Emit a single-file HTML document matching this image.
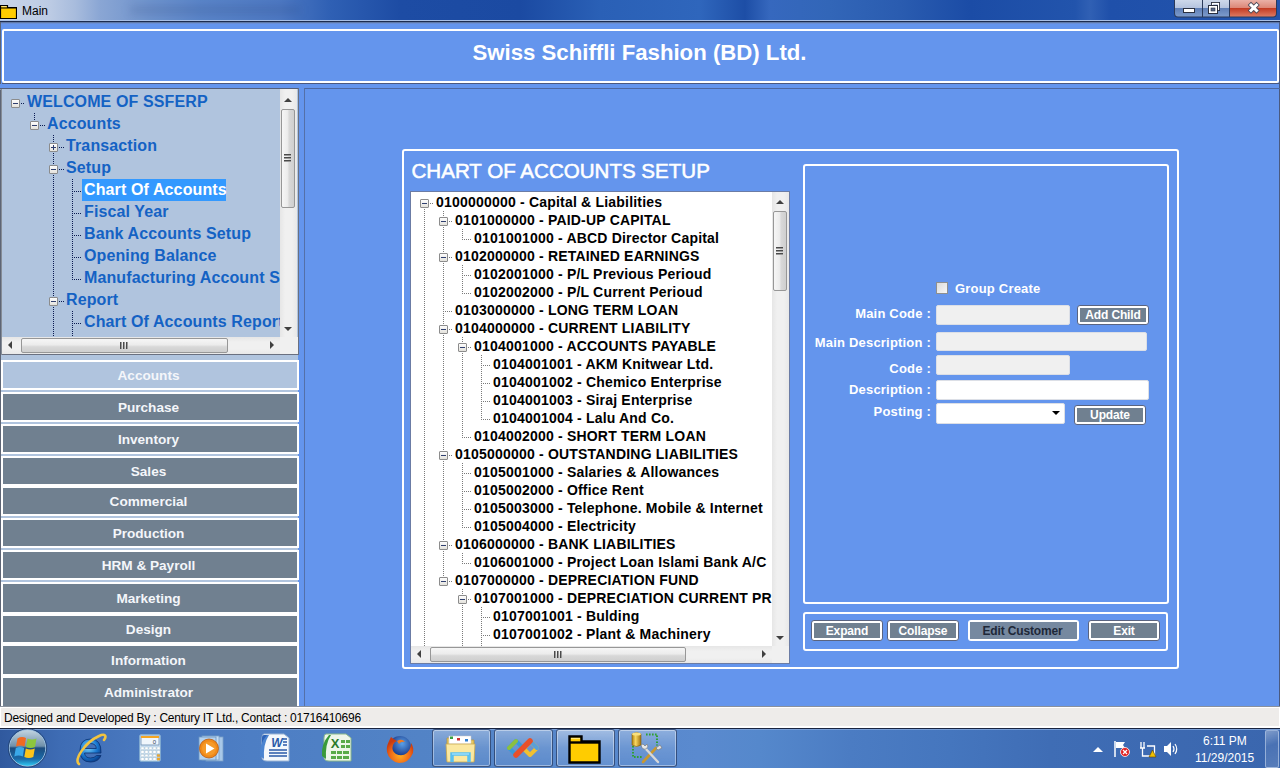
<!DOCTYPE html><html><head><meta charset="utf-8"><style>html,body{margin:0;padding:0;width:1280px;height:768px;overflow:hidden;position:relative}body{font-family:"Liberation Sans",sans-serif}</style></head><body><div style="position:absolute;left:0px;top:0px;width:1280px;height:768px;background:#6495ED"></div>
<div style="position:absolute;left:0px;top:0px;width:1280px;height:20px;background:linear-gradient(90deg,#c9d5e8 0px,#bccbe4 50px,#a8bcdd 75px,#8aa6d4 100px,#6e92cc 150px,#5a84c8 200px,#4d78c2 280px,#2f60b4 330px,#1d4ca4 400px,#1b4aa2 520px,#2a60b6 600px,#2f66bc 700px,#1d4ea6 745px,#3668be 770px,#3266b8 830px,#2a5cb0 900px,#1b4ca6 970px,#2254ac 1075px,#3060b4 1090px,#1f50aa 1110px,#2354ac 1280px)"></div>
<div style="position:absolute;left:130px;top:6px;width:170px;height:8px;background:rgba(20,40,90,0.14);filter:blur(4px)"></div>
<div style="position:absolute;left:0px;top:20px;width:1280px;height:1px;background:#a9c0e6"></div>
<div style="position:absolute;left:0px;top:21px;width:1280px;height:1px;background:#1c2c50"></div>
<div style="position:absolute;left:0px;top:22px;width:1280px;height:1px;background:#5f79a8"></div>
<div style="position:absolute;left:0px;top:23px;width:1280px;height:1px;background:#6a8fd8"></div>
<svg style="position:absolute;left:0;top:4px" width="17" height="15" viewBox="0 0 17 15"><path d="M0.5 1.5h7v2h9v11h-16z" fill="#ffcc00" stroke="#000" stroke-width="1.2"/><path d="M1 4h15" stroke="#000" stroke-width="1"/><path d="M1.5 2.5h5" stroke="#ffe680" stroke-width="1"/></svg>
<div style="position:absolute;left:22px;top:4.34px;line-height:15px;font-family:'Liberation Sans',sans-serif;font-size:12px;font-weight:normal;color:#000;white-space:nowrap;">Main</div>
<svg style="position:absolute;left:1173px;top:0" width="105" height="19" viewBox="0 0 105 19"><defs><linearGradient id="cbn" x1="0" y1="0" x2="0" y2="1"><stop offset="0" stop-color="#cdd8ea"/><stop offset="0.48" stop-color="#b4c3de"/><stop offset="0.5" stop-color="#5f7fb6"/><stop offset="1" stop-color="#7d9bcc"/></linearGradient><linearGradient id="cbc" x1="0" y1="0" x2="0" y2="1"><stop offset="0" stop-color="#eab0a6"/><stop offset="0.48" stop-color="#dc8676"/><stop offset="0.5" stop-color="#c33a22"/><stop offset="1" stop-color="#dd7a62"/></linearGradient></defs><path d="M1 0 V13 Q1 17.5 5 17.5 H100 Q104 17.5 104 13 V0 Z" fill="#2b3a5a"/><path d="M2 0 V13 Q2 16.5 5 16.5 H29 V0 Z" fill="url(#cbn)"/><rect x="30" y="0" width="26" height="16.5" fill="url(#cbn)"/><path d="M57 0 V16.5 H100 Q103 16.5 103 13 V0 Z" fill="url(#cbc)"/><rect x="10.5" y="8.5" width="11" height="4" fill="#fff" stroke="#2a3040" stroke-width="1"/><rect x="38.5" y="2.5" width="8" height="8" fill="none" stroke="#2a3040" stroke-width="1"/><rect x="39.5" y="3.5" width="6" height="6" fill="none" stroke="#fff" stroke-width="1.2"/><rect x="35.5" y="5.5" width="9" height="8" fill="#fff" stroke="#2a3040" stroke-width="1"/><rect x="38" y="8" width="4" height="3" fill="#5a6a8a" stroke="#2a3040" stroke-width="0.6"/><path d="M78 5 L83.5 10.5 M83.5 5 L78 10.5" stroke="#4a4a58" stroke-width="4.6" stroke-linecap="square"/><path d="M78 5 L83.5 10.5 M83.5 5 L78 10.5" stroke="#fff" stroke-width="3" stroke-linecap="square"/></svg>
<div style="position:absolute;left:0px;top:22px;width:1px;height:62px;background:#5d6575"></div>
<div style="position:absolute;left:0px;top:88px;width:1px;height:618px;background:#5d6575"></div>
<div style="position:absolute;left:1279px;top:22px;width:1px;height:685px;background:#4a5a80"></div>
<div style="position:absolute;left:2px;top:29px;width:1277px;height:54px;box-sizing:border-box;border:2px solid #fff;border-radius:2px"></div>
<div style="position:absolute;left:2px;top:83px;width:1277px;height:1px;background:#4a5880"></div>
<div style="position:absolute;left:1279px;top:29px;width:1px;height:55px;background:#4a5880"></div>
<div style="position:absolute;left:439.5px;width:400px;text-align:center;top:39.31px;line-height:28px;font-family:'Liberation Sans',sans-serif;font-size:22.2px;font-weight:bold;color:#fff;white-space:nowrap;">Swiss Schiffli Fashion (BD) Ltd.</div>
<div style="position:absolute;left:0px;top:88px;width:299px;height:1px;background:#56607a"></div>
<div style="position:absolute;left:0px;top:89px;width:298px;height:1px;background:#8e98aa"></div>
<div style="position:absolute;left:1px;top:89px;width:1px;height:266px;background:#858c96"></div>
<div style="position:absolute;left:2px;top:89px;width:296px;height:266px;background:#B0C4DE"></div>
<div style="position:absolute;left:298px;top:88px;width:1px;height:267px;background:#6a7080"></div>
<div style="position:absolute;left:2px;top:354px;width:296px;height:1px;background:#6a7080"></div>
<div style="position:absolute;left:2px;top:89px;width:278px;height:248px;overflow:hidden">
<div style="position:absolute;left:13px;top:14px;width:9px;height:1px;background:repeating-linear-gradient(90deg,#0a1a50 0 1px,transparent 1px 2px)"></div>
<div style="position:absolute;left:9px;top:10px;width:7px;height:7px;border:1px solid #8c8c8c;border-radius:1px;background:linear-gradient(#fdfdfd,#e4e2dc)"></div>
<div style="position:absolute;left:11px;top:14px;width:5px;height:1px;background:#2f3f6f"></div>
<div style="position:absolute;left:25px;top:3.46px;line-height:20px;font-family:'Liberation Sans',sans-serif;font-size:16px;font-weight:bold;color:#1462c4;white-space:nowrap;letter-spacing:0.12px">WELCOME OF SSFERP</div>
<div style="position:absolute;left:32px;top:24px;width:1px;height:13px;background:repeating-linear-gradient(180deg,#0a1a50 0 1px,transparent 1px 2px)"></div>
<div style="position:absolute;left:32px;top:36px;width:11px;height:1px;background:repeating-linear-gradient(90deg,#0a1a50 0 1px,transparent 1px 2px)"></div>
<div style="position:absolute;left:28px;top:32px;width:7px;height:7px;border:1px solid #8c8c8c;border-radius:1px;background:linear-gradient(#fdfdfd,#e4e2dc)"></div>
<div style="position:absolute;left:30px;top:36px;width:5px;height:1px;background:#2f3f6f"></div>
<div style="position:absolute;left:45px;top:25.46px;line-height:20px;font-family:'Liberation Sans',sans-serif;font-size:16px;font-weight:bold;color:#1462c4;white-space:nowrap;letter-spacing:0.12px">Accounts</div>
<div style="position:absolute;left:51px;top:46px;width:1px;height:13px;background:repeating-linear-gradient(180deg,#0a1a50 0 1px,transparent 1px 2px)"></div>
<div style="position:absolute;left:51px;top:58px;width:1px;height:9px;background:repeating-linear-gradient(180deg,#0a1a50 0 1px,transparent 1px 2px)"></div>
<div style="position:absolute;left:51px;top:58px;width:11px;height:1px;background:repeating-linear-gradient(90deg,#0a1a50 0 1px,transparent 1px 2px)"></div>
<div style="position:absolute;left:47px;top:54px;width:7px;height:7px;border:1px solid #8c8c8c;border-radius:1px;background:linear-gradient(#fdfdfd,#e4e2dc)"></div>
<div style="position:absolute;left:49px;top:58px;width:5px;height:1px;background:#2f3f6f"></div>
<div style="position:absolute;left:51px;top:56px;width:1px;height:5px;background:#2f3f6f"></div>
<div style="position:absolute;left:64px;top:47.46px;line-height:20px;font-family:'Liberation Sans',sans-serif;font-size:16px;font-weight:bold;color:#1462c4;white-space:nowrap;letter-spacing:0.12px">Transaction</div>
<div style="position:absolute;left:51px;top:68px;width:1px;height:13px;background:repeating-linear-gradient(180deg,#0a1a50 0 1px,transparent 1px 2px)"></div>
<div style="position:absolute;left:51px;top:80px;width:1px;height:9px;background:repeating-linear-gradient(180deg,#0a1a50 0 1px,transparent 1px 2px)"></div>
<div style="position:absolute;left:51px;top:80px;width:11px;height:1px;background:repeating-linear-gradient(90deg,#0a1a50 0 1px,transparent 1px 2px)"></div>
<div style="position:absolute;left:47px;top:76px;width:7px;height:7px;border:1px solid #8c8c8c;border-radius:1px;background:linear-gradient(#fdfdfd,#e4e2dc)"></div>
<div style="position:absolute;left:49px;top:80px;width:5px;height:1px;background:#2f3f6f"></div>
<div style="position:absolute;left:64px;top:69.46px;line-height:20px;font-family:'Liberation Sans',sans-serif;font-size:16px;font-weight:bold;color:#1462c4;white-space:nowrap;letter-spacing:0.12px">Setup</div>
<div style="position:absolute;left:51px;top:90px;width:1px;height:21px;background:repeating-linear-gradient(180deg,#0a1a50 0 1px,transparent 1px 2px)"></div>
<div style="position:absolute;left:70px;top:90px;width:1px;height:13px;background:repeating-linear-gradient(180deg,#0a1a50 0 1px,transparent 1px 2px)"></div>
<div style="position:absolute;left:70px;top:102px;width:1px;height:9px;background:repeating-linear-gradient(180deg,#0a1a50 0 1px,transparent 1px 2px)"></div>
<div style="position:absolute;left:70px;top:102px;width:9px;height:1px;background:repeating-linear-gradient(90deg,#0a1a50 0 1px,transparent 1px 2px)"></div>
<div style="position:absolute;left:80px;top:90px;width:144px;height:22px;background:#3399ff"></div>
<div style="position:absolute;left:82px;top:91.46px;line-height:20px;font-family:'Liberation Sans',sans-serif;font-size:16px;font-weight:bold;color:#fff;white-space:nowrap;letter-spacing:0.12px">Chart Of Accounts</div>
<div style="position:absolute;left:51px;top:112px;width:1px;height:21px;background:repeating-linear-gradient(180deg,#0a1a50 0 1px,transparent 1px 2px)"></div>
<div style="position:absolute;left:70px;top:112px;width:1px;height:13px;background:repeating-linear-gradient(180deg,#0a1a50 0 1px,transparent 1px 2px)"></div>
<div style="position:absolute;left:70px;top:124px;width:1px;height:9px;background:repeating-linear-gradient(180deg,#0a1a50 0 1px,transparent 1px 2px)"></div>
<div style="position:absolute;left:70px;top:124px;width:9px;height:1px;background:repeating-linear-gradient(90deg,#0a1a50 0 1px,transparent 1px 2px)"></div>
<div style="position:absolute;left:82px;top:113.46px;line-height:20px;font-family:'Liberation Sans',sans-serif;font-size:16px;font-weight:bold;color:#1462c4;white-space:nowrap;letter-spacing:0.12px">Fiscal Year</div>
<div style="position:absolute;left:51px;top:134px;width:1px;height:21px;background:repeating-linear-gradient(180deg,#0a1a50 0 1px,transparent 1px 2px)"></div>
<div style="position:absolute;left:70px;top:134px;width:1px;height:13px;background:repeating-linear-gradient(180deg,#0a1a50 0 1px,transparent 1px 2px)"></div>
<div style="position:absolute;left:70px;top:146px;width:1px;height:9px;background:repeating-linear-gradient(180deg,#0a1a50 0 1px,transparent 1px 2px)"></div>
<div style="position:absolute;left:70px;top:146px;width:9px;height:1px;background:repeating-linear-gradient(90deg,#0a1a50 0 1px,transparent 1px 2px)"></div>
<div style="position:absolute;left:82px;top:135.46px;line-height:20px;font-family:'Liberation Sans',sans-serif;font-size:16px;font-weight:bold;color:#1462c4;white-space:nowrap;letter-spacing:0.12px">Bank Accounts Setup</div>
<div style="position:absolute;left:51px;top:156px;width:1px;height:21px;background:repeating-linear-gradient(180deg,#0a1a50 0 1px,transparent 1px 2px)"></div>
<div style="position:absolute;left:70px;top:156px;width:1px;height:13px;background:repeating-linear-gradient(180deg,#0a1a50 0 1px,transparent 1px 2px)"></div>
<div style="position:absolute;left:70px;top:168px;width:1px;height:9px;background:repeating-linear-gradient(180deg,#0a1a50 0 1px,transparent 1px 2px)"></div>
<div style="position:absolute;left:70px;top:168px;width:9px;height:1px;background:repeating-linear-gradient(90deg,#0a1a50 0 1px,transparent 1px 2px)"></div>
<div style="position:absolute;left:82px;top:157.46px;line-height:20px;font-family:'Liberation Sans',sans-serif;font-size:16px;font-weight:bold;color:#1462c4;white-space:nowrap;letter-spacing:0.12px">Opening Balance</div>
<div style="position:absolute;left:51px;top:178px;width:1px;height:21px;background:repeating-linear-gradient(180deg,#0a1a50 0 1px,transparent 1px 2px)"></div>
<div style="position:absolute;left:70px;top:178px;width:1px;height:13px;background:repeating-linear-gradient(180deg,#0a1a50 0 1px,transparent 1px 2px)"></div>
<div style="position:absolute;left:70px;top:190px;width:9px;height:1px;background:repeating-linear-gradient(90deg,#0a1a50 0 1px,transparent 1px 2px)"></div>
<div style="position:absolute;left:82px;top:179.46px;line-height:20px;font-family:'Liberation Sans',sans-serif;font-size:16px;font-weight:bold;color:#1462c4;white-space:nowrap;letter-spacing:0.12px">Manufacturing Account Setup</div>
<div style="position:absolute;left:51px;top:200px;width:1px;height:13px;background:repeating-linear-gradient(180deg,#0a1a50 0 1px,transparent 1px 2px)"></div>
<div style="position:absolute;left:51px;top:212px;width:1px;height:9px;background:repeating-linear-gradient(180deg,#0a1a50 0 1px,transparent 1px 2px)"></div>
<div style="position:absolute;left:51px;top:212px;width:11px;height:1px;background:repeating-linear-gradient(90deg,#0a1a50 0 1px,transparent 1px 2px)"></div>
<div style="position:absolute;left:47px;top:208px;width:7px;height:7px;border:1px solid #8c8c8c;border-radius:1px;background:linear-gradient(#fdfdfd,#e4e2dc)"></div>
<div style="position:absolute;left:49px;top:212px;width:5px;height:1px;background:#2f3f6f"></div>
<div style="position:absolute;left:64px;top:201.46px;line-height:20px;font-family:'Liberation Sans',sans-serif;font-size:16px;font-weight:bold;color:#1462c4;white-space:nowrap;letter-spacing:0.12px">Report</div>
<div style="position:absolute;left:51px;top:222px;width:1px;height:21px;background:repeating-linear-gradient(180deg,#0a1a50 0 1px,transparent 1px 2px)"></div>
<div style="position:absolute;left:70px;top:222px;width:1px;height:13px;background:repeating-linear-gradient(180deg,#0a1a50 0 1px,transparent 1px 2px)"></div>
<div style="position:absolute;left:70px;top:234px;width:1px;height:9px;background:repeating-linear-gradient(180deg,#0a1a50 0 1px,transparent 1px 2px)"></div>
<div style="position:absolute;left:70px;top:234px;width:9px;height:1px;background:repeating-linear-gradient(90deg,#0a1a50 0 1px,transparent 1px 2px)"></div>
<div style="position:absolute;left:82px;top:223.46px;line-height:20px;font-family:'Liberation Sans',sans-serif;font-size:16px;font-weight:bold;color:#1462c4;white-space:nowrap;letter-spacing:0.12px">Chart Of Accounts Report</div>
<div style="position:absolute;left:51px;top:244px;width:1px;height:21px;background:repeating-linear-gradient(180deg,#0a1a50 0 1px,transparent 1px 2px)"></div>
<div style="position:absolute;left:70px;top:244px;width:1px;height:13px;background:repeating-linear-gradient(180deg,#0a1a50 0 1px,transparent 1px 2px)"></div>
<div style="position:absolute;left:70px;top:256px;width:9px;height:1px;background:repeating-linear-gradient(90deg,#0a1a50 0 1px,transparent 1px 2px)"></div>
<div style="position:absolute;left:82px;top:245.46px;line-height:20px;font-family:'Liberation Sans',sans-serif;font-size:16px;font-weight:bold;color:#1462c4;white-space:nowrap;letter-spacing:0.12px">Trial Balance</div>
<div style="position:absolute;left:51px;top:266px;width:1px;height:13px;background:repeating-linear-gradient(180deg,#0a1a50 0 1px,transparent 1px 2px)"></div>
<div style="position:absolute;left:51px;top:278px;width:11px;height:1px;background:repeating-linear-gradient(90deg,#0a1a50 0 1px,transparent 1px 2px)"></div>
<div style="position:absolute;left:64px;top:267.46px;line-height:20px;font-family:'Liberation Sans',sans-serif;font-size:16px;font-weight:bold;color:#1462c4;white-space:nowrap;letter-spacing:0.12px">Utility</div>
</div>
<div style="position:absolute;left:280px;top:89px;width:17px;height:248px;background:linear-gradient(90deg,#e6e6e6,#f0f0f0 30%,#f0f0f0 70%,#e8e8e8)"></div>
<div style="position:absolute;left:284px;top:98px;width:0;height:0;border-left:4px solid transparent;border-right:4px solid transparent;border-bottom:4px solid #404040"></div>
<div style="position:absolute;left:284px;top:327px;width:0;height:0;border-left:4px solid transparent;border-right:4px solid transparent;border-top:4px solid #404040"></div>
<div style="position:absolute;left:281px;top:109px;width:12px;height:97px;border:1px solid #979797;border-radius:2px;background:linear-gradient(90deg,#f6f6f6,#ececec 45%,#d8d8d8 60%,#cfcfcf)"></div>
<div style="position:absolute;left:284px;top:154px;width:7px;height:1px;background:#4a4a4a"></div>
<div style="position:absolute;left:284px;top:155px;width:7px;height:1px;background:#9a9a9a"></div>
<div style="position:absolute;left:284px;top:157px;width:7px;height:1px;background:#4a4a4a"></div>
<div style="position:absolute;left:284px;top:158px;width:7px;height:1px;background:#9a9a9a"></div>
<div style="position:absolute;left:284px;top:160px;width:7px;height:1px;background:#4a4a4a"></div>
<div style="position:absolute;left:284px;top:161px;width:7px;height:1px;background:#9a9a9a"></div>
<div style="position:absolute;left:2px;top:337px;width:278px;height:17px;background:linear-gradient(180deg,#e6e6e6,#f0f0f0 30%,#f0f0f0 70%,#e8e8e8)"></div>
<div style="position:absolute;left:8px;top:341px;width:0;height:0;border-top:4px solid transparent;border-bottom:4px solid transparent;border-right:4px solid #404040"></div>
<div style="position:absolute;left:270px;top:341px;width:0;height:0;border-top:4px solid transparent;border-bottom:4px solid transparent;border-left:4px solid #404040"></div>
<div style="position:absolute;left:21px;top:338px;width:205px;height:13px;border:1px solid #979797;border-radius:2px;background:linear-gradient(180deg,#f6f6f6,#ececec 45%,#d8d8d8 60%,#cfcfcf)"></div>
<div style="position:absolute;left:120px;top:342px;width:1px;height:7px;background:#4a4a4a"></div>
<div style="position:absolute;left:121px;top:342px;width:1px;height:7px;background:#9a9a9a"></div>
<div style="position:absolute;left:123px;top:342px;width:1px;height:7px;background:#4a4a4a"></div>
<div style="position:absolute;left:124px;top:342px;width:1px;height:7px;background:#9a9a9a"></div>
<div style="position:absolute;left:126px;top:342px;width:1px;height:7px;background:#4a4a4a"></div>
<div style="position:absolute;left:127px;top:342px;width:1px;height:7px;background:#9a9a9a"></div>
<div style="position:absolute;left:280px;top:337px;width:18px;height:17px;background:#f0f0f0"></div>
<div style="position:absolute;left:1px;top:355px;width:297px;height:351px;background:#B0C4DE"></div>
<div style="position:absolute;left:1px;top:360px;width:298px;height:30px;background:#fff"></div>
<div style="position:absolute;left:1px;top:392px;width:298px;height:30px;background:#fff"></div>
<div style="position:absolute;left:1px;top:424px;width:298px;height:30px;background:#fff"></div>
<div style="position:absolute;left:1px;top:456px;width:298px;height:30px;background:#fff"></div>
<div style="position:absolute;left:1px;top:486px;width:298px;height:30px;background:#fff"></div>
<div style="position:absolute;left:1px;top:518px;width:298px;height:30px;background:#fff"></div>
<div style="position:absolute;left:1px;top:550px;width:298px;height:30px;background:#fff"></div>
<div style="position:absolute;left:1px;top:582px;width:298px;height:32px;background:#fff"></div>
<div style="position:absolute;left:1px;top:614px;width:298px;height:30px;background:#fff"></div>
<div style="position:absolute;left:1px;top:644px;width:298px;height:32px;background:#fff"></div>
<div style="position:absolute;left:1px;top:676px;width:298px;height:32px;background:#fff"></div>
<div style="position:absolute;left:3px;top:362px;width:294px;height:26px;background:#B0C4DE"></div>
<div style="position:absolute;left:-51.5px;width:400px;text-align:center;top:366.79px;line-height:17px;font-family:'Liberation Sans',sans-serif;font-size:13.6px;font-weight:bold;color:#f4f6fa;white-space:nowrap;">Accounts</div>
<div style="position:absolute;left:3px;top:394px;width:294px;height:26px;background:#708090"></div>
<div style="position:absolute;left:-51.5px;width:400px;text-align:center;top:398.79px;line-height:17px;font-family:'Liberation Sans',sans-serif;font-size:13.6px;font-weight:bold;color:#f4f6fa;white-space:nowrap;">Purchase</div>
<div style="position:absolute;left:3px;top:426px;width:294px;height:26px;background:#708090"></div>
<div style="position:absolute;left:-51.5px;width:400px;text-align:center;top:430.79px;line-height:17px;font-family:'Liberation Sans',sans-serif;font-size:13.6px;font-weight:bold;color:#f4f6fa;white-space:nowrap;">Inventory</div>
<div style="position:absolute;left:3px;top:458px;width:294px;height:26px;background:#708090"></div>
<div style="position:absolute;left:-51.5px;width:400px;text-align:center;top:462.79px;line-height:17px;font-family:'Liberation Sans',sans-serif;font-size:13.6px;font-weight:bold;color:#f4f6fa;white-space:nowrap;">Sales</div>
<div style="position:absolute;left:3px;top:488px;width:294px;height:26px;background:#708090"></div>
<div style="position:absolute;left:-51.5px;width:400px;text-align:center;top:492.79px;line-height:17px;font-family:'Liberation Sans',sans-serif;font-size:13.6px;font-weight:bold;color:#f4f6fa;white-space:nowrap;">Commercial</div>
<div style="position:absolute;left:3px;top:520px;width:294px;height:26px;background:#708090"></div>
<div style="position:absolute;left:-51.5px;width:400px;text-align:center;top:524.79px;line-height:17px;font-family:'Liberation Sans',sans-serif;font-size:13.6px;font-weight:bold;color:#f4f6fa;white-space:nowrap;">Production</div>
<div style="position:absolute;left:3px;top:552px;width:294px;height:26px;background:#708090"></div>
<div style="position:absolute;left:-51.5px;width:400px;text-align:center;top:556.79px;line-height:17px;font-family:'Liberation Sans',sans-serif;font-size:13.6px;font-weight:bold;color:#f4f6fa;white-space:nowrap;">HRM &amp; Payroll</div>
<div style="position:absolute;left:3px;top:584px;width:294px;height:28px;background:#708090"></div>
<div style="position:absolute;left:-51.5px;width:400px;text-align:center;top:589.79px;line-height:17px;font-family:'Liberation Sans',sans-serif;font-size:13.6px;font-weight:bold;color:#f4f6fa;white-space:nowrap;">Marketing</div>
<div style="position:absolute;left:3px;top:616px;width:294px;height:26px;background:#708090"></div>
<div style="position:absolute;left:-51.5px;width:400px;text-align:center;top:620.79px;line-height:17px;font-family:'Liberation Sans',sans-serif;font-size:13.6px;font-weight:bold;color:#f4f6fa;white-space:nowrap;">Design</div>
<div style="position:absolute;left:3px;top:646px;width:294px;height:28px;background:#708090"></div>
<div style="position:absolute;left:-51.5px;width:400px;text-align:center;top:651.79px;line-height:17px;font-family:'Liberation Sans',sans-serif;font-size:13.6px;font-weight:bold;color:#f4f6fa;white-space:nowrap;">Information</div>
<div style="position:absolute;left:3px;top:678px;width:294px;height:28px;background:#708090"></div>
<div style="position:absolute;left:-51.5px;width:400px;text-align:center;top:683.79px;line-height:17px;font-family:'Liberation Sans',sans-serif;font-size:13.6px;font-weight:bold;color:#f4f6fa;white-space:nowrap;">Administrator</div>
<div style="position:absolute;left:0px;top:706px;width:300px;height:1px;background:#fff"></div>
<div style="position:absolute;left:304px;top:88px;width:976px;height:1px;background:#4f68a0"></div>
<div style="position:absolute;left:304px;top:88px;width:1px;height:618px;background:#5470a8"></div>
<div style="position:absolute;left:402px;top:149px;width:777px;height:520px;box-sizing:border-box;border:2px solid #fff;border-radius:3px"></div>
<div style="position:absolute;left:411.5px;top:157.88px;line-height:26px;font-family:'Liberation Sans',sans-serif;font-size:20.55px;font-weight:normal;color:#fff;white-space:nowrap;-webkit-text-stroke:0.55px #fff">CHART OF ACCOUNTS SETUP</div>
<div style="position:absolute;left:803px;top:164px;width:366px;height:440px;box-sizing:border-box;border:2px solid #fff;border-radius:3px"></div>
<div style="position:absolute;left:803px;top:612px;width:365px;height:39px;box-sizing:border-box;border:2px solid #fff;border-radius:3px"></div>
<div style="position:absolute;left:410px;top:191px;width:380px;height:473px;background:#6b7ca5"></div>
<div style="position:absolute;left:411px;top:192px;width:378px;height:471px;background:#fff"></div>
<div style="position:absolute;left:411px;top:192px;width:361px;height:454px;overflow:hidden">
<div style="position:absolute;left:13px;top:11px;width:1px;height:9px;background:repeating-linear-gradient(180deg,#7a7a7a 0 1px,transparent 1px 2px)"></div>
<div style="position:absolute;left:13px;top:11px;width:9px;height:1px;background:repeating-linear-gradient(90deg,#7a7a7a 0 1px,transparent 1px 2px)"></div>
<div style="position:absolute;left:9px;top:7px;width:7px;height:7px;border:1px solid #8c8c8c;border-radius:1px;background:linear-gradient(#fdfdfd,#e4e2dc)"></div>
<div style="position:absolute;left:11px;top:11px;width:5px;height:1px;background:#2f3f6f"></div>
<div style="position:absolute;left:25px;top:1.15px;line-height:18px;font-family:'Liberation Sans',sans-serif;font-size:14px;font-weight:bold;color:#000;white-space:nowrap;letter-spacing:0.2px">0100000000 - Capital &amp; Liabilities</div>
<div style="position:absolute;left:13px;top:21px;width:1px;height:17px;background:repeating-linear-gradient(180deg,#7a7a7a 0 1px,transparent 1px 2px)"></div>
<div style="position:absolute;left:32px;top:19px;width:1px;height:11px;background:repeating-linear-gradient(180deg,#7a7a7a 0 1px,transparent 1px 2px)"></div>
<div style="position:absolute;left:32px;top:29px;width:1px;height:9px;background:repeating-linear-gradient(180deg,#7a7a7a 0 1px,transparent 1px 2px)"></div>
<div style="position:absolute;left:32px;top:29px;width:9px;height:1px;background:repeating-linear-gradient(90deg,#7a7a7a 0 1px,transparent 1px 2px)"></div>
<div style="position:absolute;left:28px;top:25px;width:7px;height:7px;border:1px solid #8c8c8c;border-radius:1px;background:linear-gradient(#fdfdfd,#e4e2dc)"></div>
<div style="position:absolute;left:30px;top:29px;width:5px;height:1px;background:#2f3f6f"></div>
<div style="position:absolute;left:44px;top:19.15px;line-height:18px;font-family:'Liberation Sans',sans-serif;font-size:14px;font-weight:bold;color:#000;white-space:nowrap;letter-spacing:0.2px">0101000000 - PAID-UP CAPITAL</div>
<div style="position:absolute;left:13px;top:39px;width:1px;height:17px;background:repeating-linear-gradient(180deg,#7a7a7a 0 1px,transparent 1px 2px)"></div>
<div style="position:absolute;left:32px;top:39px;width:1px;height:17px;background:repeating-linear-gradient(180deg,#7a7a7a 0 1px,transparent 1px 2px)"></div>
<div style="position:absolute;left:51px;top:37px;width:1px;height:11px;background:repeating-linear-gradient(180deg,#7a7a7a 0 1px,transparent 1px 2px)"></div>
<div style="position:absolute;left:51px;top:47px;width:9px;height:1px;background:repeating-linear-gradient(90deg,#7a7a7a 0 1px,transparent 1px 2px)"></div>
<div style="position:absolute;left:63px;top:37.15px;line-height:18px;font-family:'Liberation Sans',sans-serif;font-size:14px;font-weight:bold;color:#000;white-space:nowrap;letter-spacing:0.2px">0101001000 - ABCD Director Capital</div>
<div style="position:absolute;left:13px;top:57px;width:1px;height:17px;background:repeating-linear-gradient(180deg,#7a7a7a 0 1px,transparent 1px 2px)"></div>
<div style="position:absolute;left:32px;top:55px;width:1px;height:11px;background:repeating-linear-gradient(180deg,#7a7a7a 0 1px,transparent 1px 2px)"></div>
<div style="position:absolute;left:32px;top:65px;width:1px;height:9px;background:repeating-linear-gradient(180deg,#7a7a7a 0 1px,transparent 1px 2px)"></div>
<div style="position:absolute;left:32px;top:65px;width:9px;height:1px;background:repeating-linear-gradient(90deg,#7a7a7a 0 1px,transparent 1px 2px)"></div>
<div style="position:absolute;left:28px;top:61px;width:7px;height:7px;border:1px solid #8c8c8c;border-radius:1px;background:linear-gradient(#fdfdfd,#e4e2dc)"></div>
<div style="position:absolute;left:30px;top:65px;width:5px;height:1px;background:#2f3f6f"></div>
<div style="position:absolute;left:44px;top:55.15px;line-height:18px;font-family:'Liberation Sans',sans-serif;font-size:14px;font-weight:bold;color:#000;white-space:nowrap;letter-spacing:0.2px">0102000000 - RETAINED EARNINGS</div>
<div style="position:absolute;left:13px;top:75px;width:1px;height:17px;background:repeating-linear-gradient(180deg,#7a7a7a 0 1px,transparent 1px 2px)"></div>
<div style="position:absolute;left:32px;top:75px;width:1px;height:17px;background:repeating-linear-gradient(180deg,#7a7a7a 0 1px,transparent 1px 2px)"></div>
<div style="position:absolute;left:51px;top:73px;width:1px;height:11px;background:repeating-linear-gradient(180deg,#7a7a7a 0 1px,transparent 1px 2px)"></div>
<div style="position:absolute;left:51px;top:83px;width:1px;height:9px;background:repeating-linear-gradient(180deg,#7a7a7a 0 1px,transparent 1px 2px)"></div>
<div style="position:absolute;left:51px;top:83px;width:9px;height:1px;background:repeating-linear-gradient(90deg,#7a7a7a 0 1px,transparent 1px 2px)"></div>
<div style="position:absolute;left:63px;top:73.15px;line-height:18px;font-family:'Liberation Sans',sans-serif;font-size:14px;font-weight:bold;color:#000;white-space:nowrap;letter-spacing:0.2px">0102001000 - P/L Previous Perioud</div>
<div style="position:absolute;left:13px;top:93px;width:1px;height:17px;background:repeating-linear-gradient(180deg,#7a7a7a 0 1px,transparent 1px 2px)"></div>
<div style="position:absolute;left:32px;top:93px;width:1px;height:17px;background:repeating-linear-gradient(180deg,#7a7a7a 0 1px,transparent 1px 2px)"></div>
<div style="position:absolute;left:51px;top:91px;width:1px;height:11px;background:repeating-linear-gradient(180deg,#7a7a7a 0 1px,transparent 1px 2px)"></div>
<div style="position:absolute;left:51px;top:101px;width:9px;height:1px;background:repeating-linear-gradient(90deg,#7a7a7a 0 1px,transparent 1px 2px)"></div>
<div style="position:absolute;left:63px;top:91.15px;line-height:18px;font-family:'Liberation Sans',sans-serif;font-size:14px;font-weight:bold;color:#000;white-space:nowrap;letter-spacing:0.2px">0102002000 - P/L Current Perioud</div>
<div style="position:absolute;left:13px;top:111px;width:1px;height:17px;background:repeating-linear-gradient(180deg,#7a7a7a 0 1px,transparent 1px 2px)"></div>
<div style="position:absolute;left:32px;top:109px;width:1px;height:11px;background:repeating-linear-gradient(180deg,#7a7a7a 0 1px,transparent 1px 2px)"></div>
<div style="position:absolute;left:32px;top:119px;width:1px;height:9px;background:repeating-linear-gradient(180deg,#7a7a7a 0 1px,transparent 1px 2px)"></div>
<div style="position:absolute;left:32px;top:119px;width:9px;height:1px;background:repeating-linear-gradient(90deg,#7a7a7a 0 1px,transparent 1px 2px)"></div>
<div style="position:absolute;left:44px;top:109.15px;line-height:18px;font-family:'Liberation Sans',sans-serif;font-size:14px;font-weight:bold;color:#000;white-space:nowrap;letter-spacing:0.2px">0103000000 - LONG TERM LOAN</div>
<div style="position:absolute;left:13px;top:129px;width:1px;height:17px;background:repeating-linear-gradient(180deg,#7a7a7a 0 1px,transparent 1px 2px)"></div>
<div style="position:absolute;left:32px;top:127px;width:1px;height:11px;background:repeating-linear-gradient(180deg,#7a7a7a 0 1px,transparent 1px 2px)"></div>
<div style="position:absolute;left:32px;top:137px;width:1px;height:9px;background:repeating-linear-gradient(180deg,#7a7a7a 0 1px,transparent 1px 2px)"></div>
<div style="position:absolute;left:32px;top:137px;width:9px;height:1px;background:repeating-linear-gradient(90deg,#7a7a7a 0 1px,transparent 1px 2px)"></div>
<div style="position:absolute;left:28px;top:133px;width:7px;height:7px;border:1px solid #8c8c8c;border-radius:1px;background:linear-gradient(#fdfdfd,#e4e2dc)"></div>
<div style="position:absolute;left:30px;top:137px;width:5px;height:1px;background:#2f3f6f"></div>
<div style="position:absolute;left:44px;top:127.15px;line-height:18px;font-family:'Liberation Sans',sans-serif;font-size:14px;font-weight:bold;color:#000;white-space:nowrap;letter-spacing:0.2px">0104000000 - CURRENT LIABILITY</div>
<div style="position:absolute;left:13px;top:147px;width:1px;height:17px;background:repeating-linear-gradient(180deg,#7a7a7a 0 1px,transparent 1px 2px)"></div>
<div style="position:absolute;left:32px;top:147px;width:1px;height:17px;background:repeating-linear-gradient(180deg,#7a7a7a 0 1px,transparent 1px 2px)"></div>
<div style="position:absolute;left:51px;top:145px;width:1px;height:11px;background:repeating-linear-gradient(180deg,#7a7a7a 0 1px,transparent 1px 2px)"></div>
<div style="position:absolute;left:51px;top:155px;width:1px;height:9px;background:repeating-linear-gradient(180deg,#7a7a7a 0 1px,transparent 1px 2px)"></div>
<div style="position:absolute;left:51px;top:155px;width:9px;height:1px;background:repeating-linear-gradient(90deg,#7a7a7a 0 1px,transparent 1px 2px)"></div>
<div style="position:absolute;left:47px;top:151px;width:7px;height:7px;border:1px solid #8c8c8c;border-radius:1px;background:linear-gradient(#fdfdfd,#e4e2dc)"></div>
<div style="position:absolute;left:49px;top:155px;width:5px;height:1px;background:#2f3f6f"></div>
<div style="position:absolute;left:63px;top:145.15px;line-height:18px;font-family:'Liberation Sans',sans-serif;font-size:14px;font-weight:bold;color:#000;white-space:nowrap;letter-spacing:0.2px">0104001000 - ACCOUNTS PAYABLE</div>
<div style="position:absolute;left:13px;top:165px;width:1px;height:17px;background:repeating-linear-gradient(180deg,#7a7a7a 0 1px,transparent 1px 2px)"></div>
<div style="position:absolute;left:32px;top:165px;width:1px;height:17px;background:repeating-linear-gradient(180deg,#7a7a7a 0 1px,transparent 1px 2px)"></div>
<div style="position:absolute;left:51px;top:165px;width:1px;height:17px;background:repeating-linear-gradient(180deg,#7a7a7a 0 1px,transparent 1px 2px)"></div>
<div style="position:absolute;left:70px;top:163px;width:1px;height:11px;background:repeating-linear-gradient(180deg,#7a7a7a 0 1px,transparent 1px 2px)"></div>
<div style="position:absolute;left:70px;top:173px;width:1px;height:9px;background:repeating-linear-gradient(180deg,#7a7a7a 0 1px,transparent 1px 2px)"></div>
<div style="position:absolute;left:70px;top:173px;width:9px;height:1px;background:repeating-linear-gradient(90deg,#7a7a7a 0 1px,transparent 1px 2px)"></div>
<div style="position:absolute;left:82px;top:163.15px;line-height:18px;font-family:'Liberation Sans',sans-serif;font-size:14px;font-weight:bold;color:#000;white-space:nowrap;letter-spacing:0.2px">0104001001 - AKM Knitwear Ltd.</div>
<div style="position:absolute;left:13px;top:183px;width:1px;height:17px;background:repeating-linear-gradient(180deg,#7a7a7a 0 1px,transparent 1px 2px)"></div>
<div style="position:absolute;left:32px;top:183px;width:1px;height:17px;background:repeating-linear-gradient(180deg,#7a7a7a 0 1px,transparent 1px 2px)"></div>
<div style="position:absolute;left:51px;top:183px;width:1px;height:17px;background:repeating-linear-gradient(180deg,#7a7a7a 0 1px,transparent 1px 2px)"></div>
<div style="position:absolute;left:70px;top:181px;width:1px;height:11px;background:repeating-linear-gradient(180deg,#7a7a7a 0 1px,transparent 1px 2px)"></div>
<div style="position:absolute;left:70px;top:191px;width:1px;height:9px;background:repeating-linear-gradient(180deg,#7a7a7a 0 1px,transparent 1px 2px)"></div>
<div style="position:absolute;left:70px;top:191px;width:9px;height:1px;background:repeating-linear-gradient(90deg,#7a7a7a 0 1px,transparent 1px 2px)"></div>
<div style="position:absolute;left:82px;top:181.15px;line-height:18px;font-family:'Liberation Sans',sans-serif;font-size:14px;font-weight:bold;color:#000;white-space:nowrap;letter-spacing:0.2px">0104001002 - Chemico Enterprise</div>
<div style="position:absolute;left:13px;top:201px;width:1px;height:17px;background:repeating-linear-gradient(180deg,#7a7a7a 0 1px,transparent 1px 2px)"></div>
<div style="position:absolute;left:32px;top:201px;width:1px;height:17px;background:repeating-linear-gradient(180deg,#7a7a7a 0 1px,transparent 1px 2px)"></div>
<div style="position:absolute;left:51px;top:201px;width:1px;height:17px;background:repeating-linear-gradient(180deg,#7a7a7a 0 1px,transparent 1px 2px)"></div>
<div style="position:absolute;left:70px;top:199px;width:1px;height:11px;background:repeating-linear-gradient(180deg,#7a7a7a 0 1px,transparent 1px 2px)"></div>
<div style="position:absolute;left:70px;top:209px;width:1px;height:9px;background:repeating-linear-gradient(180deg,#7a7a7a 0 1px,transparent 1px 2px)"></div>
<div style="position:absolute;left:70px;top:209px;width:9px;height:1px;background:repeating-linear-gradient(90deg,#7a7a7a 0 1px,transparent 1px 2px)"></div>
<div style="position:absolute;left:82px;top:199.15px;line-height:18px;font-family:'Liberation Sans',sans-serif;font-size:14px;font-weight:bold;color:#000;white-space:nowrap;letter-spacing:0.2px">0104001003 - Siraj Enterprise</div>
<div style="position:absolute;left:13px;top:219px;width:1px;height:17px;background:repeating-linear-gradient(180deg,#7a7a7a 0 1px,transparent 1px 2px)"></div>
<div style="position:absolute;left:32px;top:219px;width:1px;height:17px;background:repeating-linear-gradient(180deg,#7a7a7a 0 1px,transparent 1px 2px)"></div>
<div style="position:absolute;left:51px;top:219px;width:1px;height:17px;background:repeating-linear-gradient(180deg,#7a7a7a 0 1px,transparent 1px 2px)"></div>
<div style="position:absolute;left:70px;top:217px;width:1px;height:11px;background:repeating-linear-gradient(180deg,#7a7a7a 0 1px,transparent 1px 2px)"></div>
<div style="position:absolute;left:70px;top:227px;width:9px;height:1px;background:repeating-linear-gradient(90deg,#7a7a7a 0 1px,transparent 1px 2px)"></div>
<div style="position:absolute;left:82px;top:217.15px;line-height:18px;font-family:'Liberation Sans',sans-serif;font-size:14px;font-weight:bold;color:#000;white-space:nowrap;letter-spacing:0.2px">0104001004 - Lalu And Co.</div>
<div style="position:absolute;left:13px;top:237px;width:1px;height:17px;background:repeating-linear-gradient(180deg,#7a7a7a 0 1px,transparent 1px 2px)"></div>
<div style="position:absolute;left:32px;top:237px;width:1px;height:17px;background:repeating-linear-gradient(180deg,#7a7a7a 0 1px,transparent 1px 2px)"></div>
<div style="position:absolute;left:51px;top:235px;width:1px;height:11px;background:repeating-linear-gradient(180deg,#7a7a7a 0 1px,transparent 1px 2px)"></div>
<div style="position:absolute;left:51px;top:245px;width:9px;height:1px;background:repeating-linear-gradient(90deg,#7a7a7a 0 1px,transparent 1px 2px)"></div>
<div style="position:absolute;left:63px;top:235.15px;line-height:18px;font-family:'Liberation Sans',sans-serif;font-size:14px;font-weight:bold;color:#000;white-space:nowrap;letter-spacing:0.2px">0104002000 - SHORT TERM LOAN</div>
<div style="position:absolute;left:13px;top:255px;width:1px;height:17px;background:repeating-linear-gradient(180deg,#7a7a7a 0 1px,transparent 1px 2px)"></div>
<div style="position:absolute;left:32px;top:253px;width:1px;height:11px;background:repeating-linear-gradient(180deg,#7a7a7a 0 1px,transparent 1px 2px)"></div>
<div style="position:absolute;left:32px;top:263px;width:1px;height:9px;background:repeating-linear-gradient(180deg,#7a7a7a 0 1px,transparent 1px 2px)"></div>
<div style="position:absolute;left:32px;top:263px;width:9px;height:1px;background:repeating-linear-gradient(90deg,#7a7a7a 0 1px,transparent 1px 2px)"></div>
<div style="position:absolute;left:28px;top:259px;width:7px;height:7px;border:1px solid #8c8c8c;border-radius:1px;background:linear-gradient(#fdfdfd,#e4e2dc)"></div>
<div style="position:absolute;left:30px;top:263px;width:5px;height:1px;background:#2f3f6f"></div>
<div style="position:absolute;left:44px;top:253.15px;line-height:18px;font-family:'Liberation Sans',sans-serif;font-size:14px;font-weight:bold;color:#000;white-space:nowrap;letter-spacing:0.2px">0105000000 - OUTSTANDING LIABILITIES</div>
<div style="position:absolute;left:13px;top:273px;width:1px;height:17px;background:repeating-linear-gradient(180deg,#7a7a7a 0 1px,transparent 1px 2px)"></div>
<div style="position:absolute;left:32px;top:273px;width:1px;height:17px;background:repeating-linear-gradient(180deg,#7a7a7a 0 1px,transparent 1px 2px)"></div>
<div style="position:absolute;left:51px;top:271px;width:1px;height:11px;background:repeating-linear-gradient(180deg,#7a7a7a 0 1px,transparent 1px 2px)"></div>
<div style="position:absolute;left:51px;top:281px;width:1px;height:9px;background:repeating-linear-gradient(180deg,#7a7a7a 0 1px,transparent 1px 2px)"></div>
<div style="position:absolute;left:51px;top:281px;width:9px;height:1px;background:repeating-linear-gradient(90deg,#7a7a7a 0 1px,transparent 1px 2px)"></div>
<div style="position:absolute;left:63px;top:271.15px;line-height:18px;font-family:'Liberation Sans',sans-serif;font-size:14px;font-weight:bold;color:#000;white-space:nowrap;letter-spacing:0.2px">0105001000 - Salaries &amp; Allowances</div>
<div style="position:absolute;left:13px;top:291px;width:1px;height:17px;background:repeating-linear-gradient(180deg,#7a7a7a 0 1px,transparent 1px 2px)"></div>
<div style="position:absolute;left:32px;top:291px;width:1px;height:17px;background:repeating-linear-gradient(180deg,#7a7a7a 0 1px,transparent 1px 2px)"></div>
<div style="position:absolute;left:51px;top:289px;width:1px;height:11px;background:repeating-linear-gradient(180deg,#7a7a7a 0 1px,transparent 1px 2px)"></div>
<div style="position:absolute;left:51px;top:299px;width:1px;height:9px;background:repeating-linear-gradient(180deg,#7a7a7a 0 1px,transparent 1px 2px)"></div>
<div style="position:absolute;left:51px;top:299px;width:9px;height:1px;background:repeating-linear-gradient(90deg,#7a7a7a 0 1px,transparent 1px 2px)"></div>
<div style="position:absolute;left:63px;top:289.15px;line-height:18px;font-family:'Liberation Sans',sans-serif;font-size:14px;font-weight:bold;color:#000;white-space:nowrap;letter-spacing:0.2px">0105002000 - Office Rent</div>
<div style="position:absolute;left:13px;top:309px;width:1px;height:17px;background:repeating-linear-gradient(180deg,#7a7a7a 0 1px,transparent 1px 2px)"></div>
<div style="position:absolute;left:32px;top:309px;width:1px;height:17px;background:repeating-linear-gradient(180deg,#7a7a7a 0 1px,transparent 1px 2px)"></div>
<div style="position:absolute;left:51px;top:307px;width:1px;height:11px;background:repeating-linear-gradient(180deg,#7a7a7a 0 1px,transparent 1px 2px)"></div>
<div style="position:absolute;left:51px;top:317px;width:1px;height:9px;background:repeating-linear-gradient(180deg,#7a7a7a 0 1px,transparent 1px 2px)"></div>
<div style="position:absolute;left:51px;top:317px;width:9px;height:1px;background:repeating-linear-gradient(90deg,#7a7a7a 0 1px,transparent 1px 2px)"></div>
<div style="position:absolute;left:63px;top:307.15px;line-height:18px;font-family:'Liberation Sans',sans-serif;font-size:14px;font-weight:bold;color:#000;white-space:nowrap;letter-spacing:0.2px">0105003000 - Telephone. Mobile &amp; Internet</div>
<div style="position:absolute;left:13px;top:327px;width:1px;height:17px;background:repeating-linear-gradient(180deg,#7a7a7a 0 1px,transparent 1px 2px)"></div>
<div style="position:absolute;left:32px;top:327px;width:1px;height:17px;background:repeating-linear-gradient(180deg,#7a7a7a 0 1px,transparent 1px 2px)"></div>
<div style="position:absolute;left:51px;top:325px;width:1px;height:11px;background:repeating-linear-gradient(180deg,#7a7a7a 0 1px,transparent 1px 2px)"></div>
<div style="position:absolute;left:51px;top:335px;width:9px;height:1px;background:repeating-linear-gradient(90deg,#7a7a7a 0 1px,transparent 1px 2px)"></div>
<div style="position:absolute;left:63px;top:325.15px;line-height:18px;font-family:'Liberation Sans',sans-serif;font-size:14px;font-weight:bold;color:#000;white-space:nowrap;letter-spacing:0.2px">0105004000 - Electricity</div>
<div style="position:absolute;left:13px;top:345px;width:1px;height:17px;background:repeating-linear-gradient(180deg,#7a7a7a 0 1px,transparent 1px 2px)"></div>
<div style="position:absolute;left:32px;top:343px;width:1px;height:11px;background:repeating-linear-gradient(180deg,#7a7a7a 0 1px,transparent 1px 2px)"></div>
<div style="position:absolute;left:32px;top:353px;width:1px;height:9px;background:repeating-linear-gradient(180deg,#7a7a7a 0 1px,transparent 1px 2px)"></div>
<div style="position:absolute;left:32px;top:353px;width:9px;height:1px;background:repeating-linear-gradient(90deg,#7a7a7a 0 1px,transparent 1px 2px)"></div>
<div style="position:absolute;left:28px;top:349px;width:7px;height:7px;border:1px solid #8c8c8c;border-radius:1px;background:linear-gradient(#fdfdfd,#e4e2dc)"></div>
<div style="position:absolute;left:30px;top:353px;width:5px;height:1px;background:#2f3f6f"></div>
<div style="position:absolute;left:44px;top:343.15px;line-height:18px;font-family:'Liberation Sans',sans-serif;font-size:14px;font-weight:bold;color:#000;white-space:nowrap;letter-spacing:0.2px">0106000000 - BANK LIABILITIES</div>
<div style="position:absolute;left:13px;top:363px;width:1px;height:17px;background:repeating-linear-gradient(180deg,#7a7a7a 0 1px,transparent 1px 2px)"></div>
<div style="position:absolute;left:32px;top:363px;width:1px;height:17px;background:repeating-linear-gradient(180deg,#7a7a7a 0 1px,transparent 1px 2px)"></div>
<div style="position:absolute;left:51px;top:361px;width:1px;height:11px;background:repeating-linear-gradient(180deg,#7a7a7a 0 1px,transparent 1px 2px)"></div>
<div style="position:absolute;left:51px;top:371px;width:9px;height:1px;background:repeating-linear-gradient(90deg,#7a7a7a 0 1px,transparent 1px 2px)"></div>
<div style="position:absolute;left:63px;top:361.15px;line-height:18px;font-family:'Liberation Sans',sans-serif;font-size:14px;font-weight:bold;color:#000;white-space:nowrap;letter-spacing:0.2px">0106001000 - Project Loan Islami Bank A/C</div>
<div style="position:absolute;left:13px;top:381px;width:1px;height:17px;background:repeating-linear-gradient(180deg,#7a7a7a 0 1px,transparent 1px 2px)"></div>
<div style="position:absolute;left:32px;top:379px;width:1px;height:11px;background:repeating-linear-gradient(180deg,#7a7a7a 0 1px,transparent 1px 2px)"></div>
<div style="position:absolute;left:32px;top:389px;width:9px;height:1px;background:repeating-linear-gradient(90deg,#7a7a7a 0 1px,transparent 1px 2px)"></div>
<div style="position:absolute;left:28px;top:385px;width:7px;height:7px;border:1px solid #8c8c8c;border-radius:1px;background:linear-gradient(#fdfdfd,#e4e2dc)"></div>
<div style="position:absolute;left:30px;top:389px;width:5px;height:1px;background:#2f3f6f"></div>
<div style="position:absolute;left:44px;top:379.15px;line-height:18px;font-family:'Liberation Sans',sans-serif;font-size:14px;font-weight:bold;color:#000;white-space:nowrap;letter-spacing:0.2px">0107000000 - DEPRECIATION FUND</div>
<div style="position:absolute;left:13px;top:399px;width:1px;height:17px;background:repeating-linear-gradient(180deg,#7a7a7a 0 1px,transparent 1px 2px)"></div>
<div style="position:absolute;left:51px;top:397px;width:1px;height:11px;background:repeating-linear-gradient(180deg,#7a7a7a 0 1px,transparent 1px 2px)"></div>
<div style="position:absolute;left:51px;top:407px;width:1px;height:9px;background:repeating-linear-gradient(180deg,#7a7a7a 0 1px,transparent 1px 2px)"></div>
<div style="position:absolute;left:51px;top:407px;width:9px;height:1px;background:repeating-linear-gradient(90deg,#7a7a7a 0 1px,transparent 1px 2px)"></div>
<div style="position:absolute;left:47px;top:403px;width:7px;height:7px;border:1px solid #8c8c8c;border-radius:1px;background:linear-gradient(#fdfdfd,#e4e2dc)"></div>
<div style="position:absolute;left:49px;top:407px;width:5px;height:1px;background:#2f3f6f"></div>
<div style="position:absolute;left:63px;top:397.15px;line-height:18px;font-family:'Liberation Sans',sans-serif;font-size:14px;font-weight:bold;color:#000;white-space:nowrap;letter-spacing:0.2px">0107001000 - DEPRECIATION CURRENT PROPERTY</div>
<div style="position:absolute;left:13px;top:417px;width:1px;height:17px;background:repeating-linear-gradient(180deg,#7a7a7a 0 1px,transparent 1px 2px)"></div>
<div style="position:absolute;left:51px;top:417px;width:1px;height:17px;background:repeating-linear-gradient(180deg,#7a7a7a 0 1px,transparent 1px 2px)"></div>
<div style="position:absolute;left:70px;top:415px;width:1px;height:11px;background:repeating-linear-gradient(180deg,#7a7a7a 0 1px,transparent 1px 2px)"></div>
<div style="position:absolute;left:70px;top:425px;width:1px;height:9px;background:repeating-linear-gradient(180deg,#7a7a7a 0 1px,transparent 1px 2px)"></div>
<div style="position:absolute;left:70px;top:425px;width:9px;height:1px;background:repeating-linear-gradient(90deg,#7a7a7a 0 1px,transparent 1px 2px)"></div>
<div style="position:absolute;left:82px;top:415.15px;line-height:18px;font-family:'Liberation Sans',sans-serif;font-size:14px;font-weight:bold;color:#000;white-space:nowrap;letter-spacing:0.2px">0107001001 - Bulding</div>
<div style="position:absolute;left:13px;top:435px;width:1px;height:17px;background:repeating-linear-gradient(180deg,#7a7a7a 0 1px,transparent 1px 2px)"></div>
<div style="position:absolute;left:51px;top:435px;width:1px;height:17px;background:repeating-linear-gradient(180deg,#7a7a7a 0 1px,transparent 1px 2px)"></div>
<div style="position:absolute;left:70px;top:433px;width:1px;height:11px;background:repeating-linear-gradient(180deg,#7a7a7a 0 1px,transparent 1px 2px)"></div>
<div style="position:absolute;left:70px;top:443px;width:1px;height:9px;background:repeating-linear-gradient(180deg,#7a7a7a 0 1px,transparent 1px 2px)"></div>
<div style="position:absolute;left:70px;top:443px;width:9px;height:1px;background:repeating-linear-gradient(90deg,#7a7a7a 0 1px,transparent 1px 2px)"></div>
<div style="position:absolute;left:82px;top:433.15px;line-height:18px;font-family:'Liberation Sans',sans-serif;font-size:14px;font-weight:bold;color:#000;white-space:nowrap;letter-spacing:0.2px">0107001002 - Plant &amp; Machinery</div>
<div style="position:absolute;left:13px;top:453px;width:1px;height:17px;background:repeating-linear-gradient(180deg,#7a7a7a 0 1px,transparent 1px 2px)"></div>
<div style="position:absolute;left:51px;top:453px;width:1px;height:17px;background:repeating-linear-gradient(180deg,#7a7a7a 0 1px,transparent 1px 2px)"></div>
<div style="position:absolute;left:70px;top:451px;width:1px;height:11px;background:repeating-linear-gradient(180deg,#7a7a7a 0 1px,transparent 1px 2px)"></div>
<div style="position:absolute;left:70px;top:461px;width:9px;height:1px;background:repeating-linear-gradient(90deg,#7a7a7a 0 1px,transparent 1px 2px)"></div>
<div style="position:absolute;left:82px;top:451.15px;line-height:18px;font-family:'Liberation Sans',sans-serif;font-size:14px;font-weight:bold;color:#000;white-space:nowrap;letter-spacing:0.2px">0107001003 - Furniture &amp; Fixture</div>
<div style="position:absolute;left:13px;top:471px;width:1px;height:17px;background:repeating-linear-gradient(180deg,#7a7a7a 0 1px,transparent 1px 2px)"></div>
<div style="position:absolute;left:51px;top:469px;width:1px;height:11px;background:repeating-linear-gradient(180deg,#7a7a7a 0 1px,transparent 1px 2px)"></div>
<div style="position:absolute;left:51px;top:479px;width:9px;height:1px;background:repeating-linear-gradient(90deg,#7a7a7a 0 1px,transparent 1px 2px)"></div>
<div style="position:absolute;left:47px;top:475px;width:7px;height:7px;border:1px solid #8c8c8c;border-radius:1px;background:linear-gradient(#fdfdfd,#e4e2dc)"></div>
<div style="position:absolute;left:49px;top:479px;width:5px;height:1px;background:#2f3f6f"></div>
<div style="position:absolute;left:63px;top:469.15px;line-height:18px;font-family:'Liberation Sans',sans-serif;font-size:14px;font-weight:bold;color:#000;white-space:nowrap;letter-spacing:0.2px">0107002000 - DEPRECIATION FIXED PROPERTY</div>
<div style="position:absolute;left:13px;top:489px;width:1px;height:17px;background:repeating-linear-gradient(180deg,#7a7a7a 0 1px,transparent 1px 2px)"></div>
<div style="position:absolute;left:70px;top:487px;width:1px;height:11px;background:repeating-linear-gradient(180deg,#7a7a7a 0 1px,transparent 1px 2px)"></div>
<div style="position:absolute;left:70px;top:497px;width:9px;height:1px;background:repeating-linear-gradient(90deg,#7a7a7a 0 1px,transparent 1px 2px)"></div>
<div style="position:absolute;left:82px;top:487.15px;line-height:18px;font-family:'Liberation Sans',sans-serif;font-size:14px;font-weight:bold;color:#000;white-space:nowrap;letter-spacing:0.2px">0107002001 - Office Equipment</div>
<div style="position:absolute;left:13px;top:505px;width:1px;height:11px;background:repeating-linear-gradient(180deg,#7a7a7a 0 1px,transparent 1px 2px)"></div>
<div style="position:absolute;left:13px;top:515px;width:9px;height:1px;background:repeating-linear-gradient(90deg,#7a7a7a 0 1px,transparent 1px 2px)"></div>
<div style="position:absolute;left:9px;top:511px;width:7px;height:7px;border:1px solid #8c8c8c;border-radius:1px;background:linear-gradient(#fdfdfd,#e4e2dc)"></div>
<div style="position:absolute;left:11px;top:515px;width:5px;height:1px;background:#2f3f6f"></div>
<div style="position:absolute;left:25px;top:505.15px;line-height:18px;font-family:'Liberation Sans',sans-serif;font-size:14px;font-weight:bold;color:#000;white-space:nowrap;letter-spacing:0.2px">0200000000 - Assets</div>
</div>
<div style="position:absolute;left:772px;top:192px;width:17px;height:454px;background:linear-gradient(90deg,#e6e6e6,#f0f0f0 30%,#f0f0f0 70%,#e8e8e8)"></div>
<div style="position:absolute;left:776px;top:200px;width:0;height:0;border-left:4px solid transparent;border-right:4px solid transparent;border-bottom:4px solid #404040"></div>
<div style="position:absolute;left:776px;top:636px;width:0;height:0;border-left:4px solid transparent;border-right:4px solid transparent;border-top:4px solid #404040"></div>
<div style="position:absolute;left:773px;top:211px;width:12px;height:78px;border:1px solid #979797;border-radius:2px;background:linear-gradient(90deg,#f6f6f6,#ececec 45%,#d8d8d8 60%,#cfcfcf)"></div>
<div style="position:absolute;left:776px;top:247px;width:7px;height:1px;background:#4a4a4a"></div>
<div style="position:absolute;left:776px;top:248px;width:7px;height:1px;background:#9a9a9a"></div>
<div style="position:absolute;left:776px;top:250px;width:7px;height:1px;background:#4a4a4a"></div>
<div style="position:absolute;left:776px;top:251px;width:7px;height:1px;background:#9a9a9a"></div>
<div style="position:absolute;left:776px;top:253px;width:7px;height:1px;background:#4a4a4a"></div>
<div style="position:absolute;left:776px;top:254px;width:7px;height:1px;background:#9a9a9a"></div>
<div style="position:absolute;left:411px;top:646px;width:361px;height:17px;background:linear-gradient(180deg,#e6e6e6,#f0f0f0 30%,#f0f0f0 70%,#e8e8e8)"></div>
<div style="position:absolute;left:417px;top:650px;width:0;height:0;border-top:4px solid transparent;border-bottom:4px solid transparent;border-right:4px solid #404040"></div>
<div style="position:absolute;left:762px;top:650px;width:0;height:0;border-top:4px solid transparent;border-bottom:4px solid transparent;border-left:4px solid #404040"></div>
<div style="position:absolute;left:430px;top:647px;width:254px;height:13px;border:1px solid #979797;border-radius:2px;background:linear-gradient(180deg,#f6f6f6,#ececec 45%,#d8d8d8 60%,#cfcfcf)"></div>
<div style="position:absolute;left:554px;top:651px;width:1px;height:7px;background:#4a4a4a"></div>
<div style="position:absolute;left:555px;top:651px;width:1px;height:7px;background:#9a9a9a"></div>
<div style="position:absolute;left:557px;top:651px;width:1px;height:7px;background:#4a4a4a"></div>
<div style="position:absolute;left:558px;top:651px;width:1px;height:7px;background:#9a9a9a"></div>
<div style="position:absolute;left:560px;top:651px;width:1px;height:7px;background:#4a4a4a"></div>
<div style="position:absolute;left:561px;top:651px;width:1px;height:7px;background:#9a9a9a"></div>
<div style="position:absolute;left:772px;top:646px;width:17px;height:17px;background:#f0f0f0"></div>
<div style="position:absolute;left:936px;top:282px;width:10px;height:10px;border:1px solid #8e8f8f;background:linear-gradient(135deg,#dcdcdc,#f6f6f6)"></div>
<div style="position:absolute;left:955px;top:280.50px;line-height:16px;font-family:'Liberation Sans',sans-serif;font-size:13px;font-weight:bold;color:#fff;white-space:nowrap;letter-spacing:0.2px">Group Create</div>
<div style="position:absolute;left:531px;width:400px;text-align:right;top:305.50px;line-height:16px;font-family:'Liberation Sans',sans-serif;font-size:13px;font-weight:bold;color:#fff;white-space:nowrap;letter-spacing:0.2px">Main Code :</div>
<div style="position:absolute;left:531px;width:400px;text-align:right;top:334.50px;line-height:16px;font-family:'Liberation Sans',sans-serif;font-size:13px;font-weight:bold;color:#fff;white-space:nowrap;letter-spacing:0.2px">Main Description :</div>
<div style="position:absolute;left:531px;width:400px;text-align:right;top:360.50px;line-height:16px;font-family:'Liberation Sans',sans-serif;font-size:13px;font-weight:bold;color:#fff;white-space:nowrap;letter-spacing:0.2px">Code :</div>
<div style="position:absolute;left:531px;width:400px;text-align:right;top:381.50px;line-height:16px;font-family:'Liberation Sans',sans-serif;font-size:13px;font-weight:bold;color:#fff;white-space:nowrap;letter-spacing:0.2px">Description :</div>
<div style="position:absolute;left:531px;width:400px;text-align:right;top:403.50px;line-height:16px;font-family:'Liberation Sans',sans-serif;font-size:13px;font-weight:bold;color:#fff;white-space:nowrap;letter-spacing:0.2px">Posting :</div>
<div style="position:absolute;left:936px;top:305px;width:132px;height:18px;border:1px solid #dcdfe6;border-radius:2px;background:#f0f0f0"></div>
<div style="position:absolute;left:936px;top:332px;width:209px;height:17px;border:1px solid #dcdfe6;border-radius:2px;background:#f0f0f0"></div>
<div style="position:absolute;left:936px;top:355px;width:132px;height:18px;border:1px solid #dcdfe6;border-radius:2px;background:#f0f0f0"></div>
<div style="position:absolute;left:936px;top:380px;width:211px;height:18px;border:1px solid #dcdfe6;border-radius:2px;background:#fff"></div>
<div style="position:absolute;left:936px;top:403px;width:127px;height:19px;border:1px solid #dcdfe6;border-radius:2px;background:#fff"></div>
<div style="position:absolute;left:1052px;top:411px;width:0;height:0;border-left:4px solid transparent;border-right:4px solid transparent;border-top:4px solid #000"></div>
<div style="position:absolute;left:1077px;top:305px;width:72px;height:20px;box-sizing:border-box;border:1px solid #5a6480;border-radius:3px;background:#fff"></div>
<div style="position:absolute;left:1080px;top:308px;width:66px;height:14px;background:#708090"></div>
<div style="position:absolute;left:913.0px;width:400px;text-align:center;top:308.34px;line-height:15px;font-family:'Liberation Sans',sans-serif;font-size:12px;font-weight:bold;color:#fff;white-space:nowrap;letter-spacing:-0.15px">Add Child</div>
<div style="position:absolute;left:1074px;top:405px;width:72px;height:20px;box-sizing:border-box;border:1px solid #5a6480;border-radius:3px;background:#fff"></div>
<div style="position:absolute;left:1077px;top:408px;width:66px;height:14px;background:#708090"></div>
<div style="position:absolute;left:910.0px;width:400px;text-align:center;top:408.34px;line-height:15px;font-family:'Liberation Sans',sans-serif;font-size:12px;font-weight:bold;color:#fff;white-space:nowrap;letter-spacing:-0.15px">Update</div>
<div style="position:absolute;left:811px;top:620px;width:72px;height:21px;box-sizing:border-box;border:1px solid #5a6480;border-radius:3px;background:#fff"></div>
<div style="position:absolute;left:814px;top:623px;width:66px;height:15px;background:#708090"></div>
<div style="position:absolute;left:647.0px;width:400px;text-align:center;top:624.34px;line-height:15px;font-family:'Liberation Sans',sans-serif;font-size:12px;font-weight:bold;color:#fff;white-space:nowrap;letter-spacing:-0.15px">Expand</div>
<div style="position:absolute;left:887px;top:620px;width:72px;height:21px;box-sizing:border-box;border:1px solid #5a6480;border-radius:3px;background:#fff"></div>
<div style="position:absolute;left:890px;top:623px;width:66px;height:15px;background:#708090"></div>
<div style="position:absolute;left:723.0px;width:400px;text-align:center;top:624.34px;line-height:15px;font-family:'Liberation Sans',sans-serif;font-size:12px;font-weight:bold;color:#fff;white-space:nowrap;letter-spacing:-0.15px">Collapse</div>
<div style="position:absolute;left:968px;top:620px;width:111px;height:21px;box-sizing:border-box;border-radius:3px;background:#fff"></div>
<div style="position:absolute;left:970px;top:622px;width:107px;height:17px;background:#7689a0"></div>
<div style="position:absolute;left:822.5px;width:400px;text-align:center;top:624.34px;line-height:15px;font-family:'Liberation Sans',sans-serif;font-size:12px;font-weight:bold;color:#1e2838;white-space:nowrap;letter-spacing:-0.15px">Edit Customer</div>
<div style="position:absolute;left:1088px;top:620px;width:72px;height:21px;box-sizing:border-box;border:1px solid #5a6480;border-radius:3px;background:#fff"></div>
<div style="position:absolute;left:1091px;top:623px;width:66px;height:15px;background:#708090"></div>
<div style="position:absolute;left:924.0px;width:400px;text-align:center;top:624.34px;line-height:15px;font-family:'Liberation Sans',sans-serif;font-size:12px;font-weight:bold;color:#fff;white-space:nowrap;letter-spacing:-0.15px">Exit</div>
<div style="position:absolute;left:0px;top:706px;width:1280px;height:24px;background:#eeecea"></div>
<div style="position:absolute;left:0px;top:706px;width:1280px;height:1px;background:#8a919c"></div>
<div style="position:absolute;left:0px;top:707px;width:1280px;height:1px;background:#fff"></div>
<div style="position:absolute;left:0px;top:707px;width:1px;height:20px;background:#fff"></div>
<div style="position:absolute;left:0px;top:726px;width:1280px;height:2px;background:#fff"></div>
<div style="position:absolute;left:0px;top:728px;width:1280px;height:1px;background:#1a2540"></div>
<div style="position:absolute;left:1279px;top:707px;width:1px;height:21px;background:#fff"></div>
<div style="position:absolute;left:4px;top:711.34px;line-height:15px;font-family:'Liberation Sans',sans-serif;font-size:12px;font-weight:normal;color:#000;white-space:nowrap;letter-spacing:-0.24px">Designed and Developed By : Century IT Ltd., Contact : 01716410696</div>
<div style="position:absolute;left:0px;top:729px;width:1280px;height:39px;background:linear-gradient(90deg,#30599e 0px,#3e6cb4 60px,#4877be 130px,#4d7ec4 250px,#5283c6 420px,#5a8acf 700px,#5588cc 760px,#4b7cc3 850px,#4576be 950px,#3f6db5 1050px,#3a66ae 1280px)"></div>
<div style="position:absolute;left:0px;top:729px;width:1280px;height:1px;background:#7aa0d8"></div>
<div style="position:absolute;left:432px;top:729px;width:57px;height:36px;border:1px solid rgba(30,50,90,0.7);box-shadow:inset 0 0 0 1px rgba(255,255,255,0.4);border-radius:3px;background:linear-gradient(180deg,rgba(255,255,255,0.32),rgba(255,255,255,0.12) 50%,rgba(255,255,255,0.04))"></div>
<div style="position:absolute;left:494px;top:729px;width:57px;height:36px;border:1px solid rgba(30,50,90,0.7);box-shadow:inset 0 0 0 1px rgba(255,255,255,0.4);border-radius:3px;background:linear-gradient(180deg,rgba(255,255,255,0.32),rgba(255,255,255,0.12) 50%,rgba(255,255,255,0.04))"></div>
<div style="position:absolute;left:556px;top:729px;width:57px;height:36px;border:1px solid rgba(30,50,90,0.7);box-shadow:inset 0 0 0 1px rgba(255,255,255,0.4);border-radius:3px;background:linear-gradient(180deg,rgba(255,255,255,0.45),rgba(255,255,255,0.18) 50%,rgba(255,255,255,0.08))"></div>
<div style="position:absolute;left:618px;top:729px;width:57px;height:36px;border:1px solid rgba(30,50,90,0.7);box-shadow:inset 0 0 0 1px rgba(255,255,255,0.4);border-radius:3px;background:linear-gradient(180deg,rgba(255,255,255,0.32),rgba(255,255,255,0.12) 50%,rgba(255,255,255,0.04))"></div>
<svg style="position:absolute;left:8px;top:729px" width="40" height="39" viewBox="0 0 40 39"><defs><linearGradient id="orbg" x1="0" y1="0" x2="0" y2="1"><stop offset="0" stop-color="#c4d6e2"/><stop offset="0.45" stop-color="#6f90aa"/><stop offset="0.5" stop-color="#1d4c7e"/><stop offset="0.8" stop-color="#1a6aa8"/><stop offset="1" stop-color="#30d0f8"/></linearGradient></defs><circle cx="19.5" cy="19" r="18.3" fill="url(#orbg)" stroke="#9cc0e0" stroke-width="1"/><circle cx="19.5" cy="19" r="19.2" fill="none" stroke="#20406e" stroke-width="0.8"/><path d="M9.5 9.5 Q13.5 7 18 9 L16.5 17.5 Q12.5 15.5 8 17.5z" fill="#f06a22"/><path d="M19.5 9.5 Q24 11.5 28.5 9.5 L27 18 Q22.5 20 18 18z" fill="#8cc63e"/><path d="M7.8 19 Q12 17 16.2 19 L14.8 27.5 Q10.5 25.5 6.3 27.5z" fill="#3aa8e8"/><path d="M17.8 19.5 Q22.3 21.5 26.8 19.5 L25.3 28 Q20.8 30 16.3 28z" fill="#fcc419"/></svg>
<svg style="position:absolute;left:72px;top:731px" width="36" height="36" viewBox="0 0 36 36"><defs><radialGradient id="ieg" cx="40%" cy="35%" r="70%"><stop offset="0" stop-color="#7ad0f8"/><stop offset="0.6" stop-color="#1a78d0"/><stop offset="1" stop-color="#0a3c88"/></radialGradient></defs><path d="M29 22 H12.5 Q13 27 18.5 27 Q22.5 27 24.5 24.5 H29 Q26.5 31 18.5 31 Q8 31 8 19.5 Q8 8 18.5 8 Q29.5 8 29 22z M12.8 17.5 H24.3 Q24 12.5 18.5 12.5 Q13.5 12.5 12.8 17.5z" fill="url(#ieg)" stroke="#0a3070" stroke-width="0.8"/><path d="M7 33 C2 29 12 12 27 5 C33 2 35 5 32 9" stroke="#f2c440" stroke-width="2.6" fill="none" stroke-linecap="round"/></svg>
<svg style="position:absolute;left:139px;top:734px" width="22" height="28" viewBox="0 0 22 28"><rect x="0.5" y="0.5" width="21" height="27" rx="2" fill="#cfe3f5" stroke="#7fa9d0"/><rect x="2" y="2" width="18" height="9" fill="#f0f6fc" stroke="#6a8cb0" stroke-width="0.8"/><rect x="2" y="2" width="18" height="2" fill="#f5a623"/><text x="17" y="10" font-size="6" text-anchor="end" fill="#345" font-family="Liberation Sans">0</text><rect x="2" y="13.0" width="3" height="2.6" fill="#ffffff" stroke="#8ab" stroke-width="0.3"/><rect x="6" y="13.0" width="3" height="2.6" fill="#ffffff" stroke="#8ab" stroke-width="0.3"/><rect x="10" y="13.0" width="3" height="2.6" fill="#ffffff" stroke="#8ab" stroke-width="0.3"/><rect x="14" y="13.0" width="3" height="2.6" fill="#ffffff" stroke="#8ab" stroke-width="0.3"/><rect x="18" y="13.0" width="3" height="2.6" fill="#ffffff" stroke="#8ab" stroke-width="0.3"/><rect x="2" y="16.6" width="3" height="2.6" fill="#ffffff" stroke="#8ab" stroke-width="0.3"/><rect x="6" y="16.6" width="3" height="2.6" fill="#ffffff" stroke="#8ab" stroke-width="0.3"/><rect x="10" y="16.6" width="3" height="2.6" fill="#ffffff" stroke="#8ab" stroke-width="0.3"/><rect x="14" y="16.6" width="3" height="2.6" fill="#ffffff" stroke="#8ab" stroke-width="0.3"/><rect x="18" y="16.6" width="3" height="2.6" fill="#ffffff" stroke="#8ab" stroke-width="0.3"/><rect x="2" y="20.2" width="3" height="2.6" fill="#ffffff" stroke="#8ab" stroke-width="0.3"/><rect x="6" y="20.2" width="3" height="2.6" fill="#ffffff" stroke="#8ab" stroke-width="0.3"/><rect x="10" y="20.2" width="3" height="2.6" fill="#ffffff" stroke="#8ab" stroke-width="0.3"/><rect x="14" y="20.2" width="3" height="2.6" fill="#ffffff" stroke="#8ab" stroke-width="0.3"/><rect x="18" y="20.2" width="3" height="2.6" fill="#f5a623" stroke="#8ab" stroke-width="0.3"/><rect x="2" y="23.8" width="3" height="2.6" fill="#ffffff" stroke="#8ab" stroke-width="0.3"/><rect x="6" y="23.8" width="3" height="2.6" fill="#ffffff" stroke="#8ab" stroke-width="0.3"/><rect x="10" y="23.8" width="3" height="2.6" fill="#ffffff" stroke="#8ab" stroke-width="0.3"/><rect x="14" y="23.8" width="3" height="2.6" fill="#ffffff" stroke="#8ab" stroke-width="0.3"/><rect x="18" y="23.8" width="3" height="2.6" fill="#f5a623" stroke="#8ab" stroke-width="0.3"/></svg>
<svg style="position:absolute;left:197px;top:735px" width="30" height="28" viewBox="0 0 30 28"><rect x="9" y="2" width="17" height="24" fill="#a8c8e8" stroke="#7aa0c8" stroke-width="0.8"/><rect x="5" y="1" width="17" height="24" fill="#c4dcf4" stroke="#7aa0c8" stroke-width="0.8"/><rect x="2" y="2" width="17" height="23" fill="#b4d2f0" stroke="#6a94c0" stroke-width="0.8"/><circle cx="12" cy="13.5" r="9.5" fill="#f08a1a" stroke="#b85a10" stroke-width="0.8"/><circle cx="12" cy="13.5" r="7" fill="#f59a2a"/><path d="M9 8.5 L17.5 13.5 L9 18.5z" fill="#fff"/></svg>
<svg style="position:absolute;left:258px;top:732px" width="33" height="31" viewBox="0 0 33 31"><path d="M6 2 H26 L31 6 V29 H9 Q4 29 4 25 V6 Q4 2 6 2z" fill="#f4f8fc" stroke="#9ab4d4" stroke-width="1"/><path d="M4 25 Q4 10 10 3 H6 Q4 3 4 6z" fill="#2d63b8"/><path d="M2 24 Q1 12 9 3 L11 3 Q5 12 6 27z" fill="#4a84d0"/><text x="19" y="15" font-size="12" font-weight="bold" font-style="italic" text-anchor="middle" fill="#2a5aa8" font-family="Liberation Sans">W</text><path d="M25 7h4M25 10h4M25 13h4" stroke="#2a5aa8" stroke-width="1.6"/><path d="M11 18h18M11 21h18M11 24h18" stroke="#2a5aa8" stroke-width="1.6"/></svg>
<svg style="position:absolute;left:320px;top:732px" width="33" height="31" viewBox="0 0 33 31"><path d="M6 2 H26 L31 6 V29 H9 Q4 29 4 25 V6 Q4 2 6 2z" fill="#eef6ea" stroke="#8ab88a" stroke-width="1"/><path d="M2 24 Q1 12 9 3 L11 3 Q5 12 6 27z" fill="#3a9a3a"/><text x="15" y="16" font-size="13" font-weight="bold" text-anchor="middle" fill="#2a7a2a" font-family="Liberation Sans">X</text><path d="M21 8h4v3h-4zM26 8h4v3h-4zM21 13h4v3h-4zM26 13h4v3h-4zM11 19h5v3h-5zM17 19h5v3h-5zM23 19h6v3h-6zM11 24h5v3h-5zM17 24h5v3h-5zM23 24h6v3h-6z" fill="#5aaa4a"/></svg>
<svg style="position:absolute;left:383px;top:733px" width="32" height="31" viewBox="0 0 32 31"><defs><radialGradient id="ffg" cx="60%" cy="35%" r="55%"><stop offset="0" stop-color="#5aa0e8"/><stop offset="1" stop-color="#1a3a8a"/></radialGradient><radialGradient id="ffo" cx="50%" cy="70%" r="60%"><stop offset="0" stop-color="#ffb020"/><stop offset="0.6" stop-color="#f06a18"/><stop offset="1" stop-color="#c83a10"/></radialGradient></defs><circle cx="17" cy="14" r="11" fill="url(#ffg)"/><path d="M6 8 Q3 14 4 19 Q6 28 16 30 Q26 30 30 20 Q31 14 28 10 Q28 16 24 20 Q19 24 13 21 Q8 18 10 12 Q11 9 14 8 Q10 6 8 4 Q7 6 6 8z" fill="url(#ffo)"/><path d="M14 8 Q19 5 22 9 Q18 8 16 11z" fill="#f07a20"/></svg>
<svg style="position:absolute;left:444px;top:733px" width="34" height="31" viewBox="0 0 34 31"><path d="M3 5 H13 L15 7 H30 V28 H3z" fill="#e8c860" stroke="#b89840" stroke-width="0.8"/><rect x="5" y="3" width="22" height="8" fill="#fff" stroke="#ccc" stroke-width="0.5"/><rect x="6" y="3.5" width="3" height="2.5" fill="#3aa040"/><rect x="13" y="5" width="3" height="2.5" fill="#d03030"/><rect x="21" y="6" width="3" height="2.5" fill="#3080d0"/><path d="M2 11 H31 L30 29 H3z" fill="#fbe8a0" stroke="#c8a850" stroke-width="0.8"/><path d="M8 29 V21 H25 V29" stroke="#5ac0f0" stroke-width="3.5" fill="none"/><path d="M8 21 H25" stroke="#a8e4ff" stroke-width="1.2"/></svg>
<svg style="position:absolute;left:506px;top:735px" width="34" height="26" viewBox="0 0 34 26"><path d="M3 13 L10 6 L16 12 L10 20z" fill="none" stroke="#3a9ad8" stroke-width="4" stroke-linejoin="round"/><path d="M3 13 L10 6" stroke="#8ac040" stroke-width="4" stroke-linecap="round"/><path d="M18 14 L24 6 L31 13 L24 20z" fill="none" stroke="#f0c030" stroke-width="4" stroke-linejoin="round"/><path d="M24 6 L31 13" stroke="#5aa0d8" stroke-width="4" stroke-linecap="round"/><path d="M10 20 L24 6" stroke="#e8502a" stroke-width="5.5" stroke-linecap="round"/></svg>
<svg style="position:absolute;left:568px;top:735px" width="34" height="29" viewBox="0 0 34 29"><path d="M1.5 1.5h12v5h18v21h-30z" fill="#ffcc00" stroke="#000" stroke-width="2.4"/><path d="M2 7.5h29" stroke="#000" stroke-width="2.4"/><path d="M3 3.5h9" stroke="#ffe680" stroke-width="1.2"/></svg>
<svg style="position:absolute;left:630px;top:731px" width="34" height="34" viewBox="0 0 34 34"><defs><linearGradient id="cyl" x1="0" y1="0" x2="1" y2="0"><stop offset="0" stop-color="#b08010"/><stop offset="0.4" stop-color="#f8d860"/><stop offset="1" stop-color="#a07010"/></linearGradient></defs><path d="M2 3 Q6.5 0 11 3 V14 Q6.5 17 2 14z" fill="url(#cyl)" stroke="#806010" stroke-width="0.6"/><ellipse cx="6.5" cy="3" rx="4.5" ry="1.6" fill="#f8e080"/><path d="M16 3.5h11v11" stroke="#30a030" stroke-width="2" stroke-dasharray="1.6 1.4" fill="none"/><path d="M3 15v11h10" stroke="#30a030" stroke-width="2" stroke-dasharray="1.6 1.4" fill="none"/><path d="M13 31 L26 17" stroke="#c89830" stroke-width="2.6" stroke-linecap="round"/><path d="M26 17 L30 14 L32 17 L28 19z" fill="#e0e0e0" stroke="#707070" stroke-width="0.6"/><path d="M15 17 L28 31" stroke="#d8d8d8" stroke-width="2.4" stroke-linecap="round"/><path d="M11 14 Q12 19 16 18 Q19 16 17 13 L15 15 L13 13z" fill="#e8e8e8" stroke="#707070" stroke-width="0.6"/></svg>
<div style="position:absolute;left:1093px;top:747px;width:0;height:0;border-left:5px solid transparent;border-right:5px solid transparent;border-bottom:5px solid #fff"></div>
<svg style="position:absolute;left:1113px;top:740px" width="20" height="18" viewBox="0 0 20 18"><path d="M2 1v16" stroke="#fff" stroke-width="1.5"/><path d="M3 2h9l-2 3 2 3H3z" fill="#fff"/><circle cx="12" cy="12" r="4.5" fill="#e02020" stroke="#fff" stroke-width="0.8"/><path d="M10 10l4 4M14 10l-4 4" stroke="#fff" stroke-width="1.3"/></svg>
<svg style="position:absolute;left:1138px;top:740px" width="20" height="18" viewBox="0 0 20 18"><path d="M3 2v6M6 2v6M2 8h5M4.5 8v8h12V6H9" stroke="#fff" stroke-width="1.3" fill="none"/><path d="M11 17 L14.5 10 L18 17z" fill="#f0c000" stroke="#604000" stroke-width="0.6"/></svg>
<svg style="position:absolute;left:1162px;top:740px" width="18" height="18" viewBox="0 0 18 18"><path d="M2 6h3l4-4v14l-4-4H2z" fill="#fff"/><path d="M11 6q2 3 0 6M13 4q3.5 5 0 10" stroke="#fff" stroke-width="1.2" fill="none"/></svg>
<div style="position:absolute;left:1203px;top:734.34px;line-height:15px;font-family:'Liberation Sans',sans-serif;font-size:12px;font-weight:normal;color:#fff;white-space:nowrap;">6:11 PM</div>
<div style="position:absolute;left:1195px;top:751.34px;line-height:15px;font-family:'Liberation Sans',sans-serif;font-size:12px;font-weight:normal;color:#fff;white-space:nowrap;">11/29/2015</div>
<div style="position:absolute;left:1265px;top:730px;width:12px;height:36px;border:1px solid rgba(180,200,230,0.7);border-radius:2px;background:linear-gradient(160deg,rgba(255,255,255,0.35),rgba(255,255,255,0.08) 40%,rgba(255,255,255,0.15))"></div></body></html>
